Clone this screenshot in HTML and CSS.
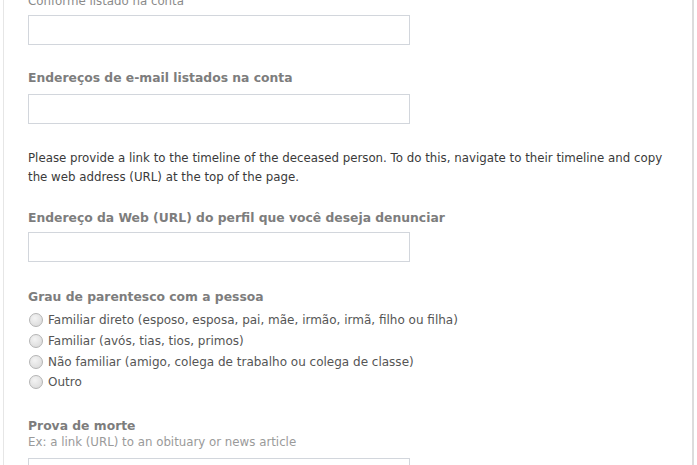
FILE: index.html
```html
<!DOCTYPE html>
<html lang="pt">
<head>
<meta charset="utf-8">
<link rel="stylesheet" href="styles.css">
</head>
<body>
<div class="frame">
  <form class="form">
    <div class="hint top">Conforme listado na conta</div>
    <div class="input first"></div>

    <div class="label gap24">Endereços de e-mail listados na conta</div>
    <div class="input"></div>

    <p class="para">Please provide a link to the timeline of the deceased person. To do this, navigate to their timeline and copy the web address (URL) at the top of the page.</p>

    <div class="label gap21">Endereço da Web (URL) do perfil que você deseja denunciar</div>
    <div class="input tight"></div>

    <div class="label gap27">Grau de parentesco com a pessoa</div>
    <ul class="options">
      <li class="option"><span class="radio"></span>Familiar direto (esposo, esposa, pai, mãe, irmão, irmã, filho ou filha)</li>
      <li class="option"><span class="radio"></span>Familiar (avós, tias, tios, primos)</li>
      <li class="option"><span class="radio"></span>Não familiar (amigo, colega de trabalho ou colega de classe)</li>
      <li class="option"><span class="radio"></span>Outro</li>
    </ul>

    <div class="label gap23">Prova de morte</div>
    <div class="hint">Ex: a link (URL) to an obituary or news article</div>
    <div class="input"></div>
  </form>
</div>
</body>
</html>
```
FILE: styles.css
```css
html, body {
  margin: 0;
  padding: 0;
  background: #ffffff;
  overflow: hidden;
}
.frame {
  margin-left: 3px;
  width: 688px;
  height: 465px;
  overflow: hidden;
  border-left: 1px solid #e6e6e6;
  border-right: 2px solid #dcdcdc;
  box-sizing: content-box;
}
.form {
  padding-left: 24px;
  margin-top: -7px;
  font-family: "DejaVu Sans", Tahoma, sans-serif;
  color: #444;
}
.hint {
  font-size: 11.8px;
  line-height: 16px;
  color: #9a9a9a;
}
.top { color: #8a8a8a; }
.input {
  margin-top: 8px;
  width: 382px;
  height: 30px;
  box-sizing: border-box;
  border: 1px solid #d2d6dc;
  background: #fff;
}
.input.first { margin-top: 6px; }
.input.tight { margin-top: 6px; }
.label {
  font-size: 12.35px;
  line-height: 16px;
  font-weight: bold;
  color: #7d7d7d;
}
.gap24 { margin-top: 25px; }
.gap21 { margin-top: 23px; }
.gap27 { margin-top: 27px; }
.gap23 { margin-top: 25px; }
.para {
  margin: 25px 0 0 0;
  width: 648px;
  font-size: 11.8px;
  line-height: 19px;
  color: #3a3a3a;
}
.options {
  list-style: none;
  margin: 5px 0 0 0;
  padding: 0;
}
.option {
  display: flex;
  align-items: center;
  height: 20.7px;
  font-size: 12px;
  color: #555;
}
.radio {
  width: 12px;
  height: 12px;
  border-radius: 50%;
  border: 1px solid #b5b5b5;
  background: radial-gradient(circle at 40% 35%, #f4f4f4, #d6d6d6);
  margin: 0 5px 0 1px;
  flex: none;
}
```
